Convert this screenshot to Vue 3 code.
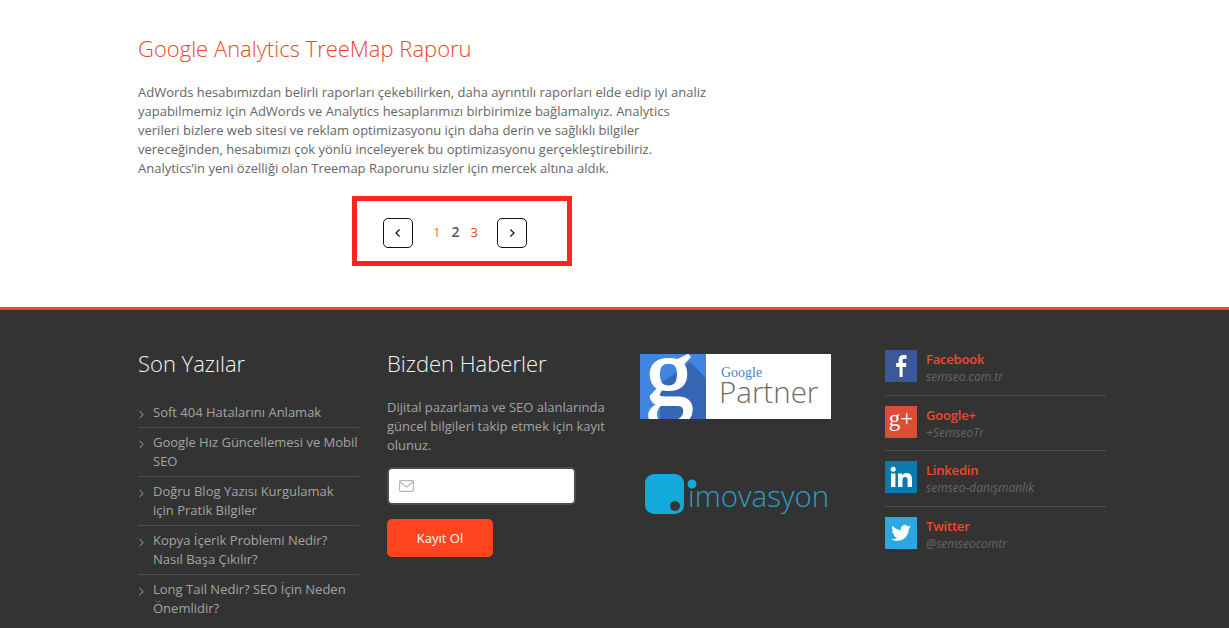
<script setup>
const posts = [
  'Soft 404 Hatalarını Anlamak',
  'Google Hız Güncellemesi ve Mobil SEO',
  'Doğru Blog Yazısı Kurgulamak\niçin Pratik Bilgiler',
  'Kopya İçerik Problemi Nedir? Nasıl Başa Çıkılır?',
  'Long Tail Nedir? SEO İçin Neden Önemlidir?'
]
const socials = [
  { name: 'Facebook', sub: 'semseo.com.tr', key: 'fb' },
  { name: 'Google+', sub: '+SemseoTr', key: 'gp' },
  { name: 'Linkedin', sub: 'semseo-danışmanlık', key: 'li' },
  { name: 'Twitter', sub: '@semseocomtr', key: 'tw' }
]
</script>

<template>
  <div class="page">
    <main class="content">
      <h1 class="title">Google Analytics TreeMap Raporu</h1>
      <p class="lead">AdWords hesabımızdan belirli raporları çekebilirken, daha ayrıntılı raporları elde edip iyi analiz yapabilmemiz için AdWords ve Analytics hesaplarımızı birbirimize bağlamalıyız. Analytics verileri bizlere web sitesi ve reklam optimizasyonu için daha derin ve sağlıklı bilgiler vereceğinden, hesabımızı çok yönlü inceleyerek bu optimizasyonu gerçekleştirebiliriz. Analytics’in yeni özelliği olan Treemap Raporunu sizler için mercek altına aldık.</p>
      <div class="pager-box">
        <button class="arrow" aria-label="Önceki">
          <svg width="8" height="10" viewBox="0 0 8 10"><path d="M5.6 1.5 2 5l3.600 3.500" fill="none" stroke="#111" stroke-width="1.2"/></svg>
        </button>
        <div class="nums">
          <span class="num first">1</span>
          <span class="num current">2</span>
          <span class="num">3</span>
        </div>
        <button class="arrow" aria-label="Sonraki">
          <svg width="8" height="10" viewBox="0 0 8 10"><path d="M2.4 1.500 6 5 2.400 8.500" fill="none" stroke="#111" stroke-width="1.2"/></svg>
        </button>
      </div>
    </main>

    <footer class="footer">
      <section class="col col-posts">
        <h2 class="heading">Son Yazılar</h2>
        <ul class="posts">
          <li v-for="p in posts" :key="p" class="post">
            <svg class="chev" width="7" height="9" viewBox="0 0 7 9"><path d="M1.5 1 5.2 4.5 1.5 8" fill="none" stroke="#a8a8a8" stroke-width="1"/></svg>
            <span class="post-text">{{ p }}</span>
          </li>
        </ul>
      </section>

      <section class="col col-news">
        <h2 class="heading">Bizden Haberler</h2>
        <p class="news-text">Dijital pazarlama ve SEO alanlarında güncel bilgileri takip etmek için kayıt olunuz.</p>
        <div class="field">
          <svg width="15" height="12" viewBox="0 0 15 12"><rect x="0.6" y="0.6" width="13.8" height="10.8" rx="1.2" fill="none" stroke="#b4b4b4" stroke-width="1.1"/><path d="M1 2l6.5 5L14 2" fill="none" stroke="#b4b4b4" stroke-width="1.1"/></svg>
        </div>
        <button class="submit">Kayıt Ol</button>
      </section>

      <section class="col col-logos">
        <svg class="partner" width="191" height="65" viewBox="0 0 191 65">
          <defs><clipPath id="gclip"><rect width="66" height="65"/></clipPath></defs>
          <rect width="191" height="65" fill="#fff"/>
          <rect width="66" height="65" fill="#4285e0"/>
          <path d="M50 8 66 24V65H20V30Z" fill="#3567b5"/>
          <g clip-path="url(#gclip)">
            <text x="5" y="51" class="g-mark">g</text>
          </g>
          <text x="81" y="23" class="g-word">Google</text>
          <text x="79" y="49" class="p-word">Partner</text>
        </svg>
        <svg class="imo" width="186" height="42" viewBox="0 0 186 42">
          <rect x="0" y="1" width="39" height="40" rx="9" fill="#14a9dc"/>
          <circle cx="30" cy="33" r="5" fill="#333"/>
          <text x="43" y="34" class="imo-word">imovasyon</text>
          <circle cx="47" cy="11" r="4.5" fill="#14a9dc"/>
        </svg>
      </section>

      <section class="col col-social">
        <div v-for="s in socials" :key="s.key" class="social">
          <span class="badge" :class="s.key">
            <svg v-if="s.key === 'fb'" width="32" height="32" viewBox="0 0 32 32"><path d="M17.6 27V17h3.4l.5-3.9h-3.9v-2.500c0-1.100.4-1.900 2-1.900h2V5.200c-.4 0-1.600-.2-3-.2-3 0-5 1.800-5 5.100v3H11.200V17h3.400v10z" fill="#fff"/></svg>
            <span v-else-if="s.key === 'gp'" class="gp-text">g+</span>
            <svg v-else-if="s.key === 'li'" width="32" height="32" viewBox="0 0 32 32"><rect x="6" y="12.500" width="4.400" height="13.500" fill="#fff"/><circle cx="8.200" cy="8.300" r="2.500" fill="#fff"/><path d="M13 12.500h4.200v1.900c.7-1.200 2.200-2.300 4.300-2.300 4.400 0 5.500 2.800 5.500 6.600V26h-4.400v-6.500c0-1.700-.3-3.500-2.400-3.500-2.200 0-2.700 1.600-2.700 3.400V26H13z" fill="#fff"/></svg>
            <svg v-else width="32" height="32" viewBox="0 0 32 32"><path d="M26 10c-.7.3-1.500.6-2.300.6.800-.5 1.500-1.300 1.800-2.200-.8.500-1.700.8-2.600 1a4 4 0 0 0-6.900 3.700c-3.400-.2-6.400-1.800-8.400-4.300a4 4 0 0 0 1.300 5.400c-.7 0-1.300-.2-1.900-.5 0 2 1.400 3.600 3.300 4-.6.200-1.200.2-1.800.1.500 1.600 2 2.800 3.800 2.800A8.100 8.100 0 0 1 6 22c1.800 1.200 4 1.800 6.300 1.800 7.500 0 11.700-6.300 11.500-12 .8-.5 1.600-1.100 2.200-1.800z" fill="#fff"/></svg>
          </span>
          <div class="social-text">
            <div class="social-name">{{ s.name }}</div>
            <div class="social-sub">{{ s.sub }}</div>
          </div>
        </div>
      </section>
    </footer>
  </div>
</template>

<style>
html, body { margin: 0; background: #fff; overflow: hidden; }
</style>

<style scoped>
.page {
  width: 1229px;
  height: 628px;
  overflow: hidden;
  font-family: "Open Sans", "Liberation Sans", sans-serif;
}
.content {
  height: 307px;
  box-sizing: border-box;
  padding: 33px 0 0 138px;
}
.title {
  margin: 0;
  font-size: 22px;
  line-height: 30px;
  font-weight: 300;
  color: #e8472c;
}
.lead {
  width: 572px;
  margin: 20px 0 0;
  font-size: 13px;
  line-height: 19.1px;
  color: #666;
}
.pager-box {
  width: 220px;
  height: 70px;
  box-sizing: border-box;
  margin: 17.5px 0 0 214px;
  border: 5px solid #ff2220;
  display: flex;
  align-items: center;
  padding-left: 26px;
}
.arrow {
  width: 30px;
  height: 30px;
  padding: 0;
  box-sizing: border-box;
  border: 1px solid #111;
  border-radius: 5px;
  background: #fff;
  display: flex;
  align-items: center;
  justify-content: center;
  margin-top: 5px;
}
.nums {
  width: 84px;
  padding-left: 20px;
  box-sizing: border-box;
  display: flex;
  gap: 11px;
  font-size: 13px;
  line-height: 18px;
  margin-top: 2px;
}
.num { color: #e8472c; }
.num.first { color: #e8705c; }
.num.current { color: #555; font-weight: 600; font-size: 14px; }
.footer {
  height: 321px;
  box-sizing: border-box;
  border-top: 3px solid #f0492a;
  background: #333;
  display: grid;
  grid-template-columns: 249px 253px 245px 222px;
  padding-left: 138px;
}
.heading {
  margin: 0;
  font-size: 22px;
  line-height: 30px;
  font-weight: 300;
  color: #f2f2f2;
}
.col-posts, .col-news { padding-top: 38px; }
.col-posts { width: 221px; }
.posts {
  list-style: none;
  margin: 20px 0 0;
  padding: 0;
}
.post {
  display: flex;
  align-items: flex-start;
  padding: 5px 0 4px;
  border-bottom: 1px solid #4e4e4e;
  font-size: 13px;
  line-height: 19.5px;
  color: #a3a3a3;
}
.post:last-child { border-bottom: 0; }
.post-text { width: 206px; white-space: pre-line; }
.chev { flex: none; margin: 7px 8px 0 0; }
.news-text {
  width: 222px;
  margin: 20px 0 0;
  font-size: 13px;
  line-height: 19.2px;
  color: #a3a3a3;
}
.field {
  width: 189px;
  height: 38px;
  box-sizing: border-box;
  margin-top: 11px;
  background: #fff;
  border: 2px solid #4c4c4c;
  border-radius: 5px;
  display: flex;
  align-items: center;
  padding-left: 10px;
}
.submit {
  display: block;
  width: 106px;
  height: 38px;
  margin-top: 14px;
  padding: 0;
  border: 0;
  border-radius: 5px;
  background: #ff441f;
  color: #fff;
  font: 400 13px "Open Sans", sans-serif;
}
.col-logos {
  padding-top: 44px;
  display: flex;
  flex-direction: column;
  align-items: flex-start;
}
.partner { display: block; }
.g-mark { font: 400 97px "Liberation Serif", serif; fill: #fff; stroke: #fff; stroke-width: 2px; }
.g-word { font: 400 14px "Liberation Serif", serif; fill: #4a7fd0; }
.p-word { font: 300 29.5px "Open Sans", sans-serif; fill: #6b6b6b; }
.imo { display: block; margin: 54px 0 0 5px; }
.imo-word { font: 300 29.5px "Open Sans", sans-serif; fill: #2f9cc4; }
.col-social {
  width: 221px;
  padding-top: 40px;
}
.social {
  display: flex;
  align-items: flex-start;
  height: 55.5px;
  box-sizing: border-box;
  border-bottom: 1px solid #4e4e4e;
}
.social + .social { padding-top: 10px; }
.social:nth-child(1) { height: 45.5px; }
.social:last-child { border-bottom: 0; }
.badge {
  flex: none;
  width: 32px;
  height: 32px;
  display: flex;
  align-items: center;
  justify-content: center;
}
.fb { background: #3b5998; }
.gp { background: #dd4b39; }
.li { background: #0a7ab1; }
.tw { background: #2ca7e0; }
.gp-text {
  font: 400 23px/26px "Liberation Serif", serif;
  color: #fff;
  margin-top: -6px;
}
.social-text { margin-left: 9px; }
.social-name {
  font-size: 13px;
  line-height: 18px;
  font-weight: 600;
  letter-spacing: -0.2px;
  color: #f0492a;
}
.social-sub {
  font-size: 12px;
  line-height: 16px;
  font-style: italic;
  color: #666;
  margin-top: 1px;
}
</style>
